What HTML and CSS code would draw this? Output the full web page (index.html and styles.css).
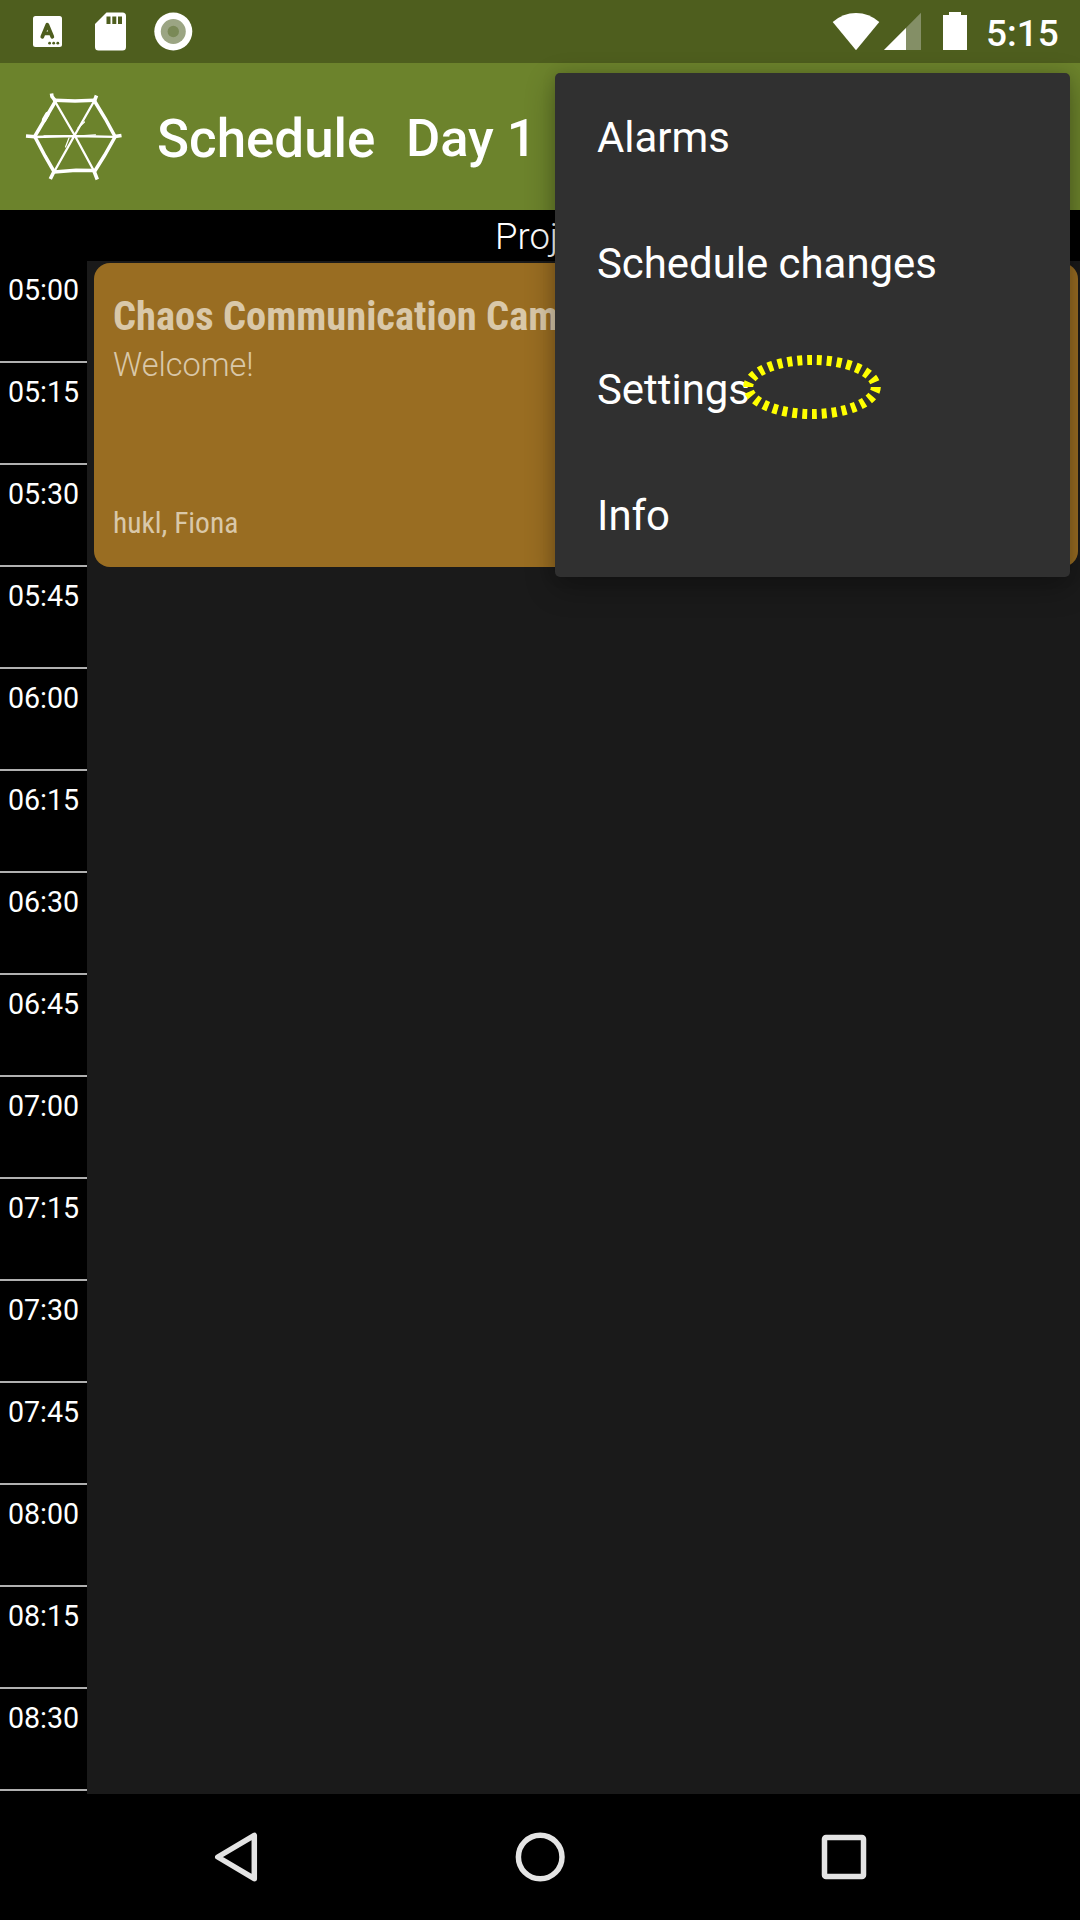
FILE: index.html
```html
<!DOCTYPE html>
<html lang="en">
<head>
<meta charset="utf-8">
<title>Schedule</title>
<link rel="stylesheet" href="styles.css">
</head>
<body>
<div class="screen">
  <header class="status">
    <svg class="status-left" width="200" height="63" viewBox="0 0 200 63">
      <rect x="33" y="16" width="29" height="31" rx="2.5" fill="#fff"/>
      <path d="M42.300 36.700L47.300 24.800L52.300 36.700M44.200 33.400H50.400" fill="none" stroke="#4e5e1e" stroke-width="3.800" stroke-linecap="round" stroke-linejoin="round"/>
      <g fill="#4e5e1e"><circle cx="49.6" cy="43.2" r="1.4"/><circle cx="53.7" cy="43.2" r="1.4"/><circle cx="57.8" cy="43.2" r="1.4"/></g>
      <path d="M106.500 12.500H122.500Q126 12.500 126 16V47Q126 50.500 122.500 50.500H98.500Q95 50.500 95 47V24Z" fill="#fff"/>
      <path d="M106.500 16.500h4v7.500h-4zM112.300 16.500h4v7.500h-4zM118 16.500h4v7.500h-4z" fill="#4e5e1e"/>
      <circle cx="173.300" cy="31.500" r="19" fill="#fff"/>
      <circle cx="173.300" cy="31.500" r="12.500" fill="#9ba583"/>
      <circle cx="173.300" cy="31.500" r="5.700" fill="#7a8957"/>
    </svg>
    <svg class="status-right" width="150" height="63" viewBox="828 0 150 63">
      <path d="M832.700 22Q843 13 856 13T879.300 22L856 50.300Z" fill="#fff"/>
      <path d="M921 12.700V50H884Z" fill="#848f66"/>
      <path d="M906 28V50H884Z" fill="#fff"/>
      <path d="M949 12h12v3h6v35h-24v-35h6z" fill="#fff"/>
    </svg>
    <span class="clock">5:15</span>
  </header>
  <div class="appbar">
    <svg class="logo" width="100" height="100" viewBox="24 87 100 100" fill="none" stroke="#fff" stroke-linecap="round">
      <path d="M54.500 100.300L75 101L94.500 100.300" stroke-width="3.500"/>
      <path d="M94.500 101L105.500 119L115 136.500" stroke-width="3.500"/>
      <path d="M115 137L104.500 155.500L94.500 171.500" stroke-width="3.500"/>
      <path d="M54 172L76 170.300L94 170.500" stroke-width="3.500"/>
      <path d="M35 137L45 156L54 171.500" stroke-width="3.500"/>
      <path d="M55 102L45 119L35 136" stroke-width="3.500"/>
      <path d="M47.500 114L44 120" stroke-width="4.500"/>
      <path d="M51.500 93.500L52 96.500L55.500 101M96.500 95.500L94 102M26 136L35 136.700M115 136.500L121.500 135.500M50.300 179L54 171.500M94 171L97.300 179.500" stroke-width="3.600" stroke-linecap="butt"/>
      <path d="M34.500 137L74 136L115 136.900M54.500 100.500L74.500 135L94 171M94.500 100.500L74.500 135.500L54 172" stroke-width="2.300"/>
      <path d="M44 135.800H70M76 136L95.500 134.800M78 128L84.500 122M69 138L65.500 147" stroke-width="1.200"/>
    </svg>
    <h1 class="title">Schedule</h1>
    <span class="day">Day 1</span>
  </div>
  <div class="rooms"><span class="room">Proj</span></div>
  <main class="schedule">
    <div class="times">
      <div class="time">05:00</div><div class="time">05:15</div><div class="time">05:30</div><div class="time">05:45</div>
      <div class="time">06:00</div><div class="time">06:15</div><div class="time">06:30</div><div class="time">06:45</div>
      <div class="time">07:00</div><div class="time">07:15</div><div class="time">07:30</div><div class="time">07:45</div>
      <div class="time">08:00</div><div class="time">08:15</div><div class="time">08:30</div>
    </div>
    <div class="lane">
      <article class="event">
        <h2 class="event-title">Chaos Communication Cam</h2>
        <p class="event-subtitle">Welcome!</p>
        <p class="event-speakers">hukl, Fiona</p>
      </article>
    </div>
  </main>
  <nav class="navbar">
    <svg class="nav-icon" width="60" height="60" viewBox="0 0 60 60"><path d="M47.300 8.300V51.700L10.800 30Z"/></svg>
    <svg class="nav-icon" width="60" height="60" viewBox="0 0 60 60"><circle cx="29.200" cy="30" r="21.800"/></svg>
    <svg class="nav-icon" width="60" height="60" viewBox="0 0 60 60"><rect x="10.500" y="10.500" width="39" height="39" rx="1.500"/></svg>
  </nav>
  <div class="menu">
    <div class="menu-item">Alarms</div>
    <div class="menu-item">Schedule changes</div>
    <div class="menu-item">Settings</div>
    <div class="menu-item">Info</div>
    <svg class="marker" width="140" height="66" viewBox="0 0 140 66"><ellipse cx="70" cy="33" rx="63.800" ry="27" pathLength="300"/></svg>
  </div>
</div>
</body>
</html>
```
FILE: styles.css
```css
* { box-sizing: border-box; margin: 0; padding: 0; }
body { background: #000; color: #fff; font-family: Roboto, sans-serif; }
svg { display: block; flex: none; }
.screen { position: relative; width: 1080px; height: 1920px; overflow: hidden; display: flex; flex-direction: column; }
.status { height: 63px; flex: none; background: #4e5e1e; display: flex; }
.status-right { margin-left: 628px; }
.clock { margin-left: 8px; font-size: 37px; font-weight: 500; line-height: 67px; white-space: nowrap; }
.appbar { height: 147px; flex: none; background: #6c832c; display: flex; align-items: flex-start; padding: 24px 0 0 24px; }
.title { margin-left: 33px; font-size: 52.900px; font-weight: 500; line-height: 62px; padding-top: 21px; white-space: nowrap; }
.day { margin-left: 30.500px; font-size: 52.500px; font-weight: 500; line-height: 62px; padding-top: 20px; white-space: nowrap; }
.rooms { height: 51px; flex: none; background: #000; padding-left: 495px; }
.room { font-size: 36.500px; font-weight: 300; line-height: 54px; }
.schedule { height: 1533px; flex: none; display: flex; }
.times { width: 87px; background: #000; }
.time { height: 102px; border-bottom: 2px solid #b0b0b0; padding-top: 11px; font-size: 28.600px; line-height: 36px; text-align: center; }
.lane { flex: 1; background: #1a1a1a; padding: 2px 2px 0 7px; }
.event { height: 304px; border-radius: 16px; background: #996d22; color: #d9c8a9; padding: 29px 19px 25px; display: flex; flex-direction: column; white-space: nowrap; }
.event-title { font-family: "Roboto Condensed", Roboto, sans-serif; font-stretch: 75%; font-size: 40.500px; font-weight: 700; line-height: 48px; }
.event-subtitle { font-size: 32.500px; font-weight: 300; line-height: 50px; }
.event-speakers { margin-top: auto; font-family: "Roboto Condensed", Roboto, sans-serif; font-stretch: 75%; font-size: 29.500px; line-height: 38px; }
.navbar { height: 126px; flex: none; background: #000; display: flex; justify-content: space-between; padding: 33px 206px 0 207px; }
.nav-icon { fill: none; stroke: #e4e4e4; stroke-width: 5.500; stroke-linejoin: round; }
.menu { position: absolute; left: 555px; top: 73px; width: 515px; height: 504px; border-radius: 5px; background: #303030; box-shadow: 0 10px 30px rgba(0, 0, 0, .3), 0 0 14px rgba(0, 0, 0, .12); }
.menu-item { height: 126px; padding-left: 42px; font-size: 41.900px; line-height: 130px; }
.marker { position: absolute; left: 187px; top: 281px; fill: none; stroke: #ff0; stroke-width: 10; stroke-dasharray: 5 5; }
```
